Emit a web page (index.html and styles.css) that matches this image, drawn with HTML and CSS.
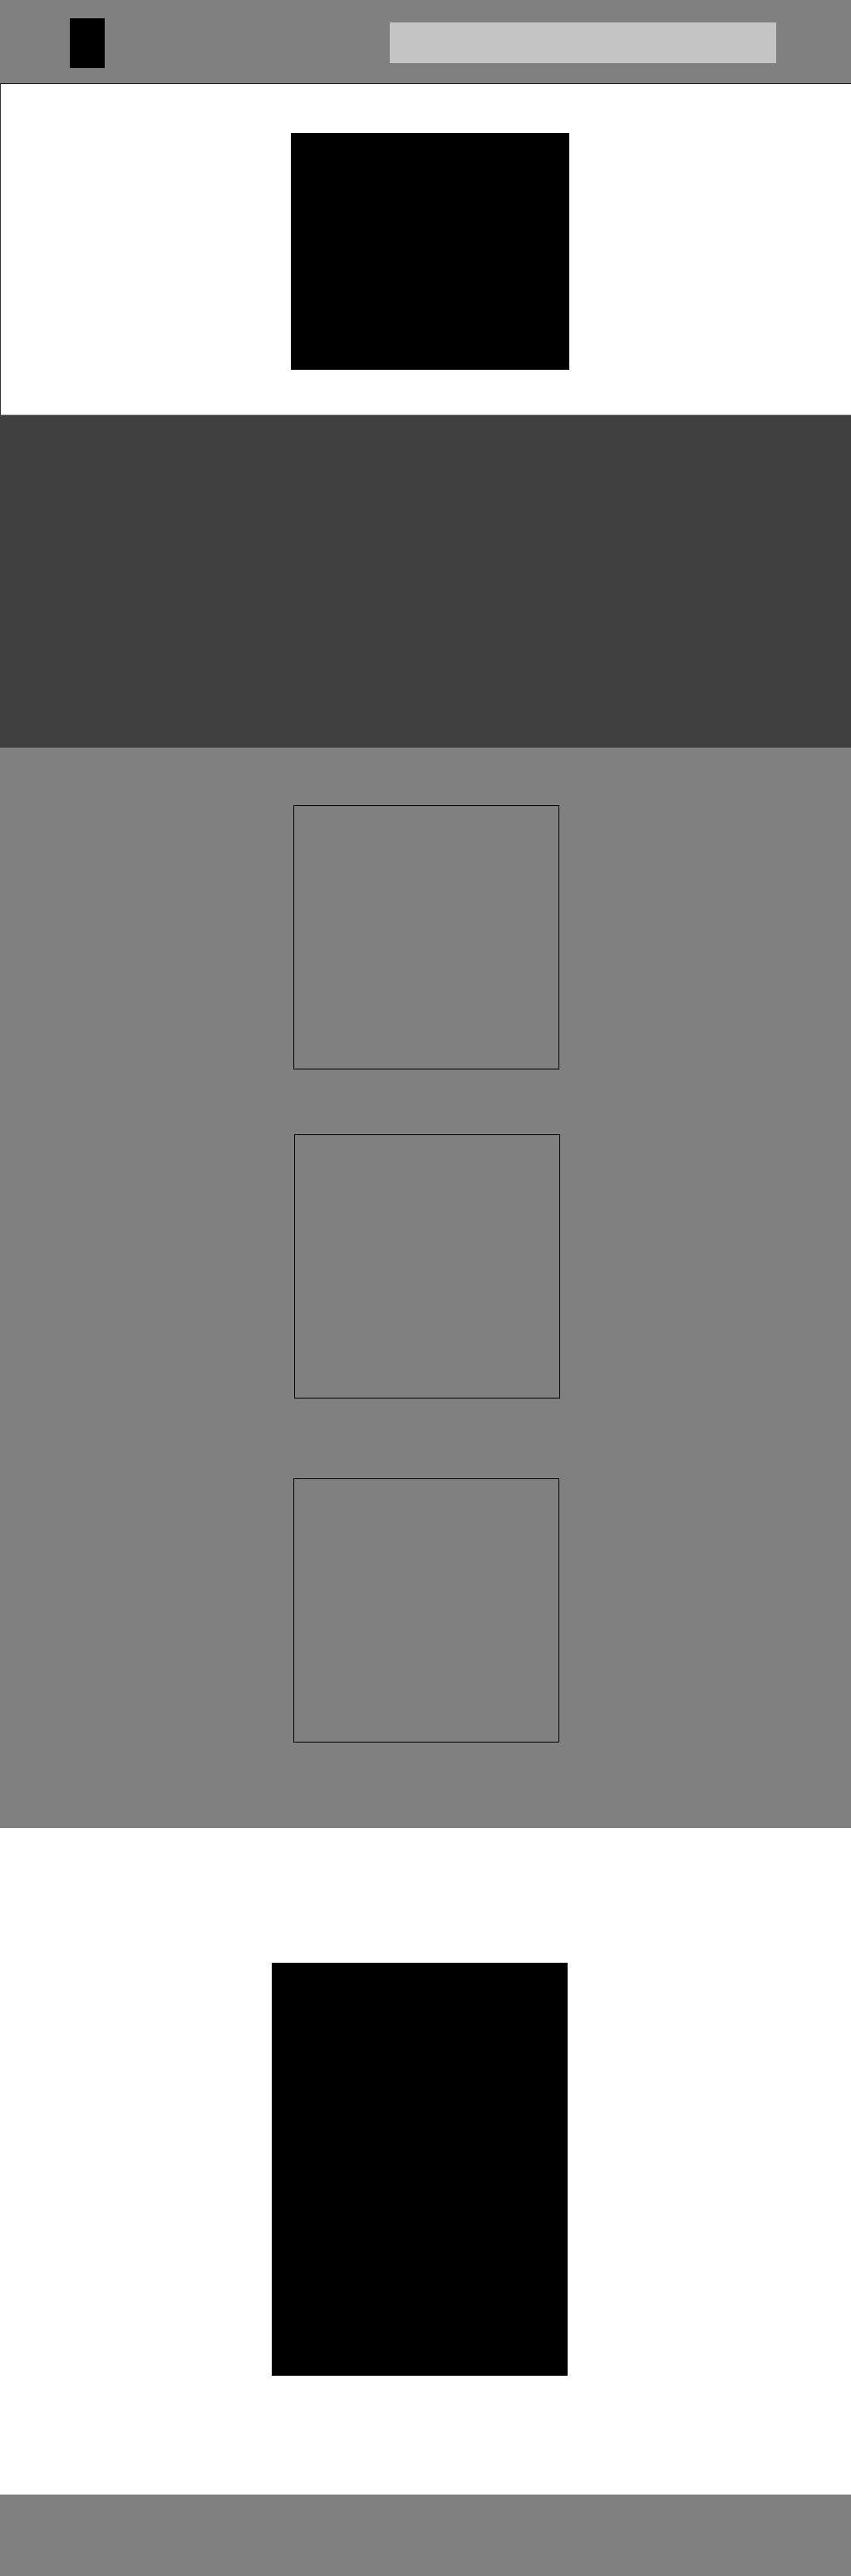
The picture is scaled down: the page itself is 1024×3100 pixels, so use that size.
FILE: index.html
```html
<!DOCTYPE html>
<html lang="en">
<head>
<meta charset="utf-8">
<title>Wireframe</title>
<link rel="stylesheet" href="styles.css">
</head>
<body>
<header class="topbar">
  <div class="logo"></div>
  <div class="search"></div>
</header>
<section class="hero">
  <div class="hero-media"></div>
</section>
<section class="band"></section>
<section class="cards">
  <div class="card card-1"></div>
  <div class="card card-2"></div>
  <div class="card card-3"></div>
</section>
<section class="feature">
  <div class="feature-media"></div>
</section>
<footer class="footer"></footer>
</body>
</html>
```

FILE: styles.css
```css
* { box-sizing: border-box; }
html, body { margin: 0; padding: 0; }
body {
  font-family: "Liberation Sans", Arial, sans-serif;
  background: #808080;
  width: 1024px;
}

.topbar {
  height: 100px;
  background: #808080;
  display: flex;
  align-items: flex-start;
}
.logo {
  width: 42px;
  height: 60px;
  background: #000;
  margin: 22px 0 0 84px;
}
.search {
  width: 465px;
  height: 49px;
  background: #c4c4c4;
  margin: 27px 0 0 343px;
}

.hero {
  height: 400px;
  background: #fff;
  border-top: 1px solid #1a1a1a;
  border-left: 1px solid #333;
  border-bottom: 1px solid #6e6e6e;
  padding: 59px 0 0 349px;
}
.hero-media {
  width: 335px;
  height: 285px;
  background: #000;
}

.band {
  height: 400px;
  background: #404040;
  border-bottom: 1px solid #555;
}

.cards {
  height: 1300px;
  background: #808080;
  display: flex;
  flex-direction: column;
  align-items: flex-start;
  padding-top: 69px;
}
.card {
  width: 320px;
  height: 318px;
  border: 1px solid #000;
  margin-left: 353px;
}
.card-2 { margin-top: 78px; margin-left: 354px; }
.card-3 { margin-top: 96px; }

.feature {
  height: 802px;
  background: #fff;
  padding: 162px 0 0 327px;
}
.feature-media {
  width: 356px;
  height: 497px;
  background: #000;
}

.footer {
  height: 98px;
  background: #808080;
}
```
